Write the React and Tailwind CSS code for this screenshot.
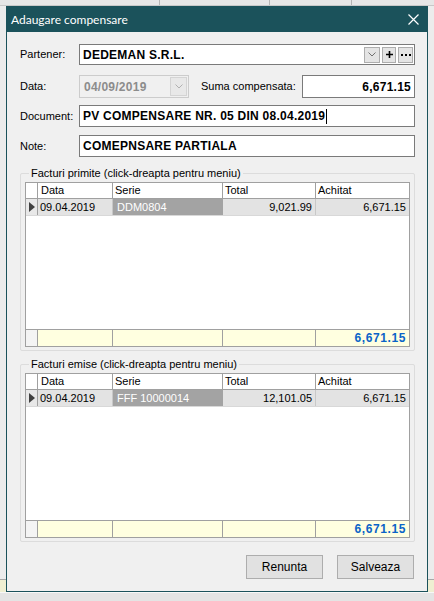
import React from "react";

const F = { fontFamily: "'Liberation Sans', Arial, sans-serif" };

function Grid({ serie, total }) {
  return (
    <div className="flex flex-col border border-[#a0a0a0] bg-white h-full">
      <div className="flex h-[16px] border-b border-[#a0a0a0] text-[11px] leading-[15px] text-black">
        <div className="w-[12px] border-r border-[#a0a0a0] bg-white" />
        <div className="w-[75px] border-r border-[#a0a0a0] pl-[3px]">Data</div>
        <div className="w-[110px] border-r border-[#a0a0a0] pl-[2px]">Serie</div>
        <div className="w-[93px] border-r border-[#a0a0a0] pl-[2px]">Total</div>
        <div className="flex-1 pl-[2px]">Achitat</div>
      </div>
      <div className="flex h-[17px] text-[11px] leading-[16px] text-black border-b border-[#d8d8d8]">
        <div className="w-[12px] border-r border-[#a0a0a0] bg-[#e8e8e8] flex items-center justify-center">
          <svg width="6" height="10" viewBox="0 0 6 10"><path d="M0 0 L6 5 L0 10 Z" fill="#404040" /></svg>
        </div>
        <div className="w-[75px] border-r border-[#c8c8c8] pl-[2px] bg-[#e3e3e3]">09.04.2019</div>
        <div className="w-[110px] pl-[4px] bg-[#a3a3a3] text-white">{serie}</div>
        <div className="w-[93px] border-r border-[#c8c8c8] pr-[3px] text-right bg-[#e3e3e3]">{total}</div>
        <div className="flex-1 pr-[3px] text-right bg-[#e3e3e3]">6,671.15</div>
      </div>
      <div className="flex-1" />
      <div className="flex h-[17px] border-t border-[#a0a0a0] text-[12px] leading-[16px] bg-[#ffffe0]">
        <div className="w-[12px] border-r border-[#a0a0a0] bg-[#f4f4f4]" />
        <div className="w-[75px] border-r border-[#a0a0a0]" />
        <div className="w-[110px] border-r border-[#a0a0a0]" />
        <div className="w-[93px] border-r border-[#a0a0a0]" />
        <div className="flex-1 pr-[3px] text-right font-bold tracking-[0.6px] text-[#0a64c8]">6,671.15</div>
      </div>
    </div>
  );
}

function Group({ title, serie, total, className }) {
  return (
    <div className={"relative border border-[#dcdcdc] rounded-[2px] px-[4px] pt-[8px] pb-[3px] " + className}>
      <div className="absolute left-[8px] top-[-8px] bg-[#f0f0f0] px-[2px] text-[11px] leading-[14px] text-black">{title}</div>
      <div className="h-full">
        <Grid serie={serie} total={total} />
      </div>
    </div>
  );
}

function Input({ children, className = "" }) {
  return (
    <div className={"border border-[#7a7a7a] bg-white h-[22px] flex items-center px-[3px] text-[12px] font-bold tracking-[0.25px] " + className}>
      {children}
    </div>
  );
}

export default function App() {
  return (
    <div className="relative w-[434px] h-[601px] overflow-hidden bg-[#ececec]" style={F}>
      {/* background app */}
      <div className="absolute left-0 top-0 w-full h-[6px] bg-[#e6e6e6] flex border-b border-[#c8c8c8]">
        <div className="w-[160px] border-r border-[#b4b4b4]" />
        <div className="w-[110px] border-r border-[#b4b4b4]" />
        <div className="w-[82px] border-r border-[#b4b4b4]" />
        <div className="flex-1" />
      </div>
      <div className="absolute left-0 top-[579px] w-full h-[13px] bg-[#efefd2] border-t border-[#a8a8a8] flex">
        <div className="w-[10px] border-r border-[#8a8a8a]" />
        <div className="w-[150px] border-r border-[#8a8a8a]" />
        <div className="w-[110px] border-r border-[#8a8a8a]" />
        <div className="w-[82px] border-r border-[#8a8a8a]" />
      </div>
      <div className="absolute left-0 top-[592px] w-full h-[9px] bg-[#e4e4e4] border-t border-[#f8f8f8]" />

      {/* window */}
      <div className="absolute left-[6px] top-[6px] w-[422px] h-[586px] border border-[#1b525b] bg-[#f0f0f0] flex flex-col">
        <div className="h-[25px] bg-[#1b525b] flex items-center justify-between pl-[4px] pr-[8px] shrink-0">
          <span className="text-white text-[12px]" style={{ fontFamily: "Lato, 'Noto Sans', sans-serif" }}>Adaugare compensare</span>
          <svg width="11" height="11" viewBox="0 0 11 11"><path d="M0.5 0.5 L10.5 10.5 M10.5 0.5 L0.5 10.5" stroke="#fff" strokeWidth="1.2" /></svg>
        </div>
        <div className="flex-1 flex flex-col pl-[13px] pr-[12px] pt-[12px] text-[11px] text-black">
          {/* Partener */}
          <div className="flex items-center h-[21px]">
            <div className="w-[59px]">Partener:</div>
            <div className="flex-1 border border-[#7a7a7a] bg-white h-[21px] flex items-center pl-[3px] pr-[1px]">
              <span className="flex-1 font-bold text-[12px] tracking-[0.25px]">DEDEMAN S.R.L.</span>
              <div className="flex gap-[2px]">
                <div className="w-[16px] h-[16px] border border-[#adadad] bg-[#e4e4e4] flex items-center justify-center">
                  <svg width="8" height="5" viewBox="0 0 8 5"><path d="M0.5 0.5 L4 4 L7.5 0.5" stroke="#707070" fill="none" /></svg>
                </div>
                <div className="w-[14px] h-[16px] border border-[#adadad] bg-[#e4e4e4] flex items-center justify-center">
                  <svg width="7" height="7" viewBox="0 0 7 7"><path d="M3.5 0 V7 M0 3.5 H7" stroke="#000" strokeWidth="1.6" /></svg>
                </div>
                <div className="w-[15px] h-[16px] border border-[#adadad] bg-[#e4e4e4] flex items-center justify-center">
                  <svg width="10" height="2" viewBox="0 0 10 2"><rect x="0" y="0" width="2" height="2" fill="#000" /><rect x="4" y="0" width="2" height="2" fill="#000" /><rect x="8" y="0" width="2" height="2" fill="#000" /></svg>
                </div>
              </div>
            </div>
          </div>
          {/* Data */}
          <div className="flex items-center mt-[10px] h-[23px]">
            <div className="w-[59px]">Data:</div>
            <div className="w-[110px] h-[23px] border border-[#cccccc] bg-[#f0f0f0] flex items-center pl-[4px] pr-[1px]">
              <span className="flex-1 font-bold text-[12px] tracking-[0.25px] text-[#8c8c8c]">04/09/2019</span>
              <div className="w-[17px] h-[19px] border border-[#d4d4d4] bg-[#e8e8e8] flex items-center justify-center">
                <svg width="8" height="5" viewBox="0 0 8 5"><path d="M0.5 0.5 L4 4 L7.5 0.5" stroke="#b0b0b0" fill="none" /></svg>
              </div>
            </div>
            <div className="ml-[12px] w-[101px] whitespace-nowrap">Suma compensata:</div>
            <Input className="flex-1 justify-end h-[23px]"><span>6,671.15</span></Input>
          </div>
          {/* Document */}
          <div className="flex items-center mt-[7px]">
            <div className="w-[59px]">Document:</div>
            <Input className="flex-1"><span>PV COMPENSARE NR. 05 DIN 08.04.2019</span><span className="ml-[1px] w-px h-[15px] bg-black" /></Input>
          </div>
          {/* Note */}
          <div className="flex items-center mt-[8px]">
            <div className="w-[59px]">Note:</div>
            <Input className="flex-1"><span>COMEPNSARE PARTIALA</span></Input>
          </div>

          <Group title="Facturi primite (click-dreapta pentru meniu)" serie="DDM0804" total="9,021.99" className="mt-[16px] h-[178px]" />
          <Group title="Facturi emise (click-dreapta pentru meniu)" serie="FFF 10000014" total="12,101.05" className="mt-[13px] h-[178px]" />

          <div className="flex justify-end gap-[14px] mt-[13px] pr-[1px]">
            <button className="w-[77px] h-[24px] border border-[#adadad] bg-[#e1e1e1] text-[12px]">Renunta</button>
            <button className="w-[77px] h-[24px] border border-[#adadad] bg-[#e1e1e1] text-[12px]">Salveaza</button>
          </div>
        </div>
      </div>
    </div>
  );
}
